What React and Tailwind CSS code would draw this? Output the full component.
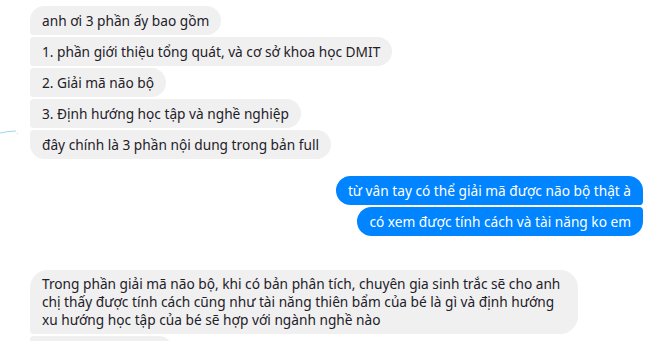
import React from 'react';

const leftMsgs = [
  'anh ơi 3 phần ấy bao gồm',
  '1. phần giới thiệu tổng quát, và cơ sở khoa học DMIT',
  '2. Giải mã não bộ',
  '3. Định hướng học tập và nghề nghiệp',
  'đây chính là 3 phần nội dung trong bản full',
];

const rightMsgs = [
  'từ vân tay có thể giải mã được não bộ thật à',
  'có xem được tính cách và tài năng ko em',
];

const leftRadius = (i, n) => {
  if (i === 0) return 'rounded-r-[15px] rounded-tl-[15px] rounded-bl-[4px]';
  if (i === n - 1) return 'rounded-r-[15px] rounded-tl-[4px] rounded-bl-[15px]';
  return 'rounded-r-[15px] rounded-l-[4px]';
};

const rightRadius = (i, n) => {
  if (i === 0) return 'rounded-l-[15px] rounded-tr-[15px] rounded-br-[4px]';
  if (i === n - 1) return 'rounded-l-[15px] rounded-tr-[4px] rounded-br-[15px]';
  return 'rounded-l-[15px] rounded-r-[4px]';
};

export default function App() {
  return (
    <div
      className="relative w-[651px] h-[341px] overflow-hidden bg-white text-[13.7px] leading-[18px]"
      style={{ fontFamily: '"Segoe UI", "Noto Sans", sans-serif' }}
    >
      {/* stray mark on the left edge */}
      <svg className="absolute left-0 top-[128px]" width="22" height="10" viewBox="0 0 22 10">
        <path d="M0 5 Q8 3 16 3" stroke="#9fd6ee" strokeWidth="1.2" fill="none" />
        <rect x="17" y="5" width="1" height="1" fill="#b8e2f2" />
      </svg>

      <div className="flex flex-col pl-[30px] pr-[8px] pt-[6px]">
        <div className="flex flex-col items-start gap-[2px]">
          {leftMsgs.map((m, i) => (
            <div
              key={i}
              className={`bg-[#f1f0f0] text-[#1d2129] px-[12px] pt-[6px] pb-[5px] whitespace-nowrap ${leftRadius(i, leftMsgs.length)}`}
            >
              {m}
            </div>
          ))}
        </div>

        <div className="flex flex-col items-end gap-[2px] mt-[17px]">
          {rightMsgs.map((m, i) => (
            <div
              key={i}
              className={`bg-[#0084ff] text-white px-[12px] pt-[6px] pb-[5px] whitespace-nowrap ${rightRadius(i, rightMsgs.length)}`}
            >
              {m}
            </div>
          ))}
        </div>

        <div className="flex flex-col items-start gap-[2px] mt-[34px]">
          <div className="w-[548px] bg-[#f1f0f0] text-[#1d2129] px-[12px] py-[5px] whitespace-nowrap rounded-r-[18px] rounded-tl-[18px] rounded-bl-[4px]">
            Trong phần giải mã não bộ, khi có bản phân tích, chuyên gia sinh trắc sẽ cho anh
            <br />
            chị thấy được tính cách cũng như tài năng thiên bẩm của bé là gì và định hướng
            <br />
            xu hướng học tập của bé sẽ hợp với ngành nghề nào
          </div>
          <div className="w-[143px] h-[29px] bg-[#f1f0f0] rounded-r-[15px] rounded-l-[4px]" />
        </div>
      </div>
    </div>
  );
}
